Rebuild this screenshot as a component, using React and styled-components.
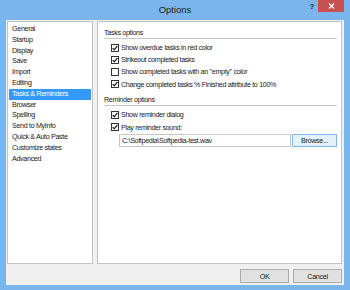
import React from 'react'
import styled, { createGlobalStyle } from 'styled-components'

const GlobalStyle = createGlobalStyle`
  html, body {
    margin: 0;
    padding: 0;
    background: #fff;
  }
  body {
    font-family: 'Liberation Sans', Arial, sans-serif;
  }
`

const pages = [
  'General',
  'Startup',
  'Display',
  'Save',
  'Import',
  'Editing',
  'Tasks & Reminders',
  'Browser',
  'Spelling',
  'Send to MyInfo',
  'Quick & Auto Paste',
  'Customize states',
  'Advanced',
]

const taskOptions = [
  { id: 'overdue', text: 'Show overdue tasks in red color', checked: true },
  { id: 'strike', text: 'Strikeout completed tasks', checked: true },
  { id: 'empty', text: 'Show completed tasks with an "empty" color', checked: false },
  { id: 'finished', text: 'Change completed tasks % Finished attribute to 100%', checked: true },
]

const reminderOptions = [
  { id: 'dialog', text: 'Show reminder dialog', checked: true },
  { id: 'sound', text: 'Play reminder sound:', checked: true },
]

const Check = ({ checked, text }) => {
  return (
    <CheckRow>
      <Box>
        {checked && (
          <svg width='6' height='6' viewBox='0 0 6 6'>
            <path d='M0.6 3.1 L2.3 4.8 L5.4 0.9' fill='none' stroke='#222' strokeWidth='1.3' />
          </svg>
        )}
      </Box>
      <span>{text}</span>
    </CheckRow>
  )
}

const App = () => {
  return (
    <>
      <GlobalStyle />
      <Window>
        <TitleBar>
          <span />
          <Title>Options</Title>
          <Controls>
            <Help>?</Help>
            <Close>
              <svg width='7' height='6' viewBox='0 0 7 6'>
                <path d='M1 0.5 L6 5.5 M6 0.5 L1 5.5' stroke='#fff' strokeWidth='1.3' />
              </svg>
            </Close>
          </Controls>
        </TitleBar>
        <Client>
          <Body>
            <PageList>
              {pages.map((page) => (
                <PageItem key={page} $active={page === 'Tasks & Reminders'}>
                  {page}
                </PageItem>
              ))}
            </PageList>
            <Panel>
              <GroupHeader>Tasks options</GroupHeader>
              <Group>
                {taskOptions.map(({ id, text, checked }) => (
                  <Check key={id} text={text} checked={checked} />
                ))}
              </Group>
              <GroupHeader>Reminder options</GroupHeader>
              <Group>
                {reminderOptions.map(({ id, text, checked }) => (
                  <Check key={id} text={text} checked={checked} />
                ))}
                <FileRow>
                  <PathInput>C:\Softpedia\Softpedia-test.wav</PathInput>
                  <Button $focused $width='45px'>Browse...</Button>
                </FileRow>
              </Group>
            </Panel>
          </Body>
          <Footer>
            <Button>OK</Button>
            <Button>Cancel</Button>
          </Footer>
        </Client>
      </Window>
    </>
  )
}

const Window = styled.div`
  width: 350px;
  height: 290px;
  background: #7ab6eb;
  display: flex;
  flex-direction: column;
  box-sizing: border-box;
  padding: 0 6px 5px 6px;
  font-size: 7.2px;
  letter-spacing: -0.35px;
  color: #1a1a1a;
`

const TitleBar = styled.div`
  height: 20px;
  display: grid;
  grid-template-columns: 1fr auto 1fr;
  align-items: start;
`

const Title = styled.div`
  font-size: 9.5px;
  letter-spacing: 0;
  line-height: 20px;
  color: #1e1e1e;
`

const Controls = styled.div`
  display: flex;
  justify-content: flex-end;
  align-items: flex-start;
  gap: 4px;
`

const Help = styled.span`
  font-size: 8px;
  font-weight: bold;
  color: #1e2a38;
  line-height: 14px;
`

const Close = styled.div`
  width: 26px;
  height: 12px;
  background: #c75050;
  display: flex;
  align-items: center;
  justify-content: center;
`

const Client = styled.div`
  flex: 1;
  background: #f0f0f0;
  padding: 1px 2px 0 1px;
  display: flex;
  flex-direction: column;
`

const Body = styled.div`
  display: flex;
  gap: 4px;
  height: 243px;
`

const PageList = styled.ul`
  list-style: none;
  margin: 0;
  padding: 2px 1px;
  width: 86px;
  box-sizing: border-box;
  background: #fff;
  border: 1px solid #c4c4c4;
`

const PageItem = styled.li`
  height: 10.8px;
  line-height: 10.8px;
  padding-left: 3px;
  background: ${({ $active }) => ($active ? '#3399ff' : 'transparent')};
  color: ${({ $active }) => ($active ? '#fff' : '#1a1a1a')};
  white-space: nowrap;
`

const Panel = styled.section`
  flex: 1;
  background: #fff;
  border: 1px solid #c4c4c4;
  padding: 6px 4px 0 6px;
`

const GroupHeader = styled.div`
  line-height: 9px;
  border-bottom: 1px solid #c9c9c9;
  padding-bottom: 1px;
`

const Group = styled.div`
  display: flex;
  flex-direction: column;
  padding: 2.5px 0 5px 7px;
`

const CheckRow = styled.label`
  display: flex;
  align-items: center;
  gap: 2px;
  height: 12.2px;
  white-space: nowrap;
`

const Box = styled.span`
  width: 8px;
  height: 8px;
  box-sizing: border-box;
  border: 1px solid #333;
  background: #fff;
  display: flex;
  align-items: center;
  justify-content: center;
`

const FileRow = styled.div`
  display: flex;
  gap: 1px;
  margin: 1px 0 0 8px;
`

const PathInput = styled.div`
  flex: 1;
  height: 13px;
  box-sizing: border-box;
  border: 1px solid #c6c6c6;
  background: #fff;
  line-height: 11px;
  padding-left: 2px;
`

const Button = styled.button`
  width: ${({ $width }) => $width || '49px'};
  height: ${({ $focused }) => ($focused ? '13px' : '14px')};
  box-sizing: border-box;
  margin: 0;
  padding: 0;
  font-family: inherit;
  font-size: 7.2px;
  letter-spacing: -0.35px;
  color: #1a1a1a;
  border: 1px solid ${({ $focused }) => ($focused ? '#7eb4ea' : '#adadad')};
  background: ${({ $focused }) => ($focused ? '#e5f1fb' : '#e1e1e1')};
`

const Footer = styled.div`
  display: flex;
  justify-content: flex-end;
  gap: 4px;
  padding-top: 5px;
`

export default App
